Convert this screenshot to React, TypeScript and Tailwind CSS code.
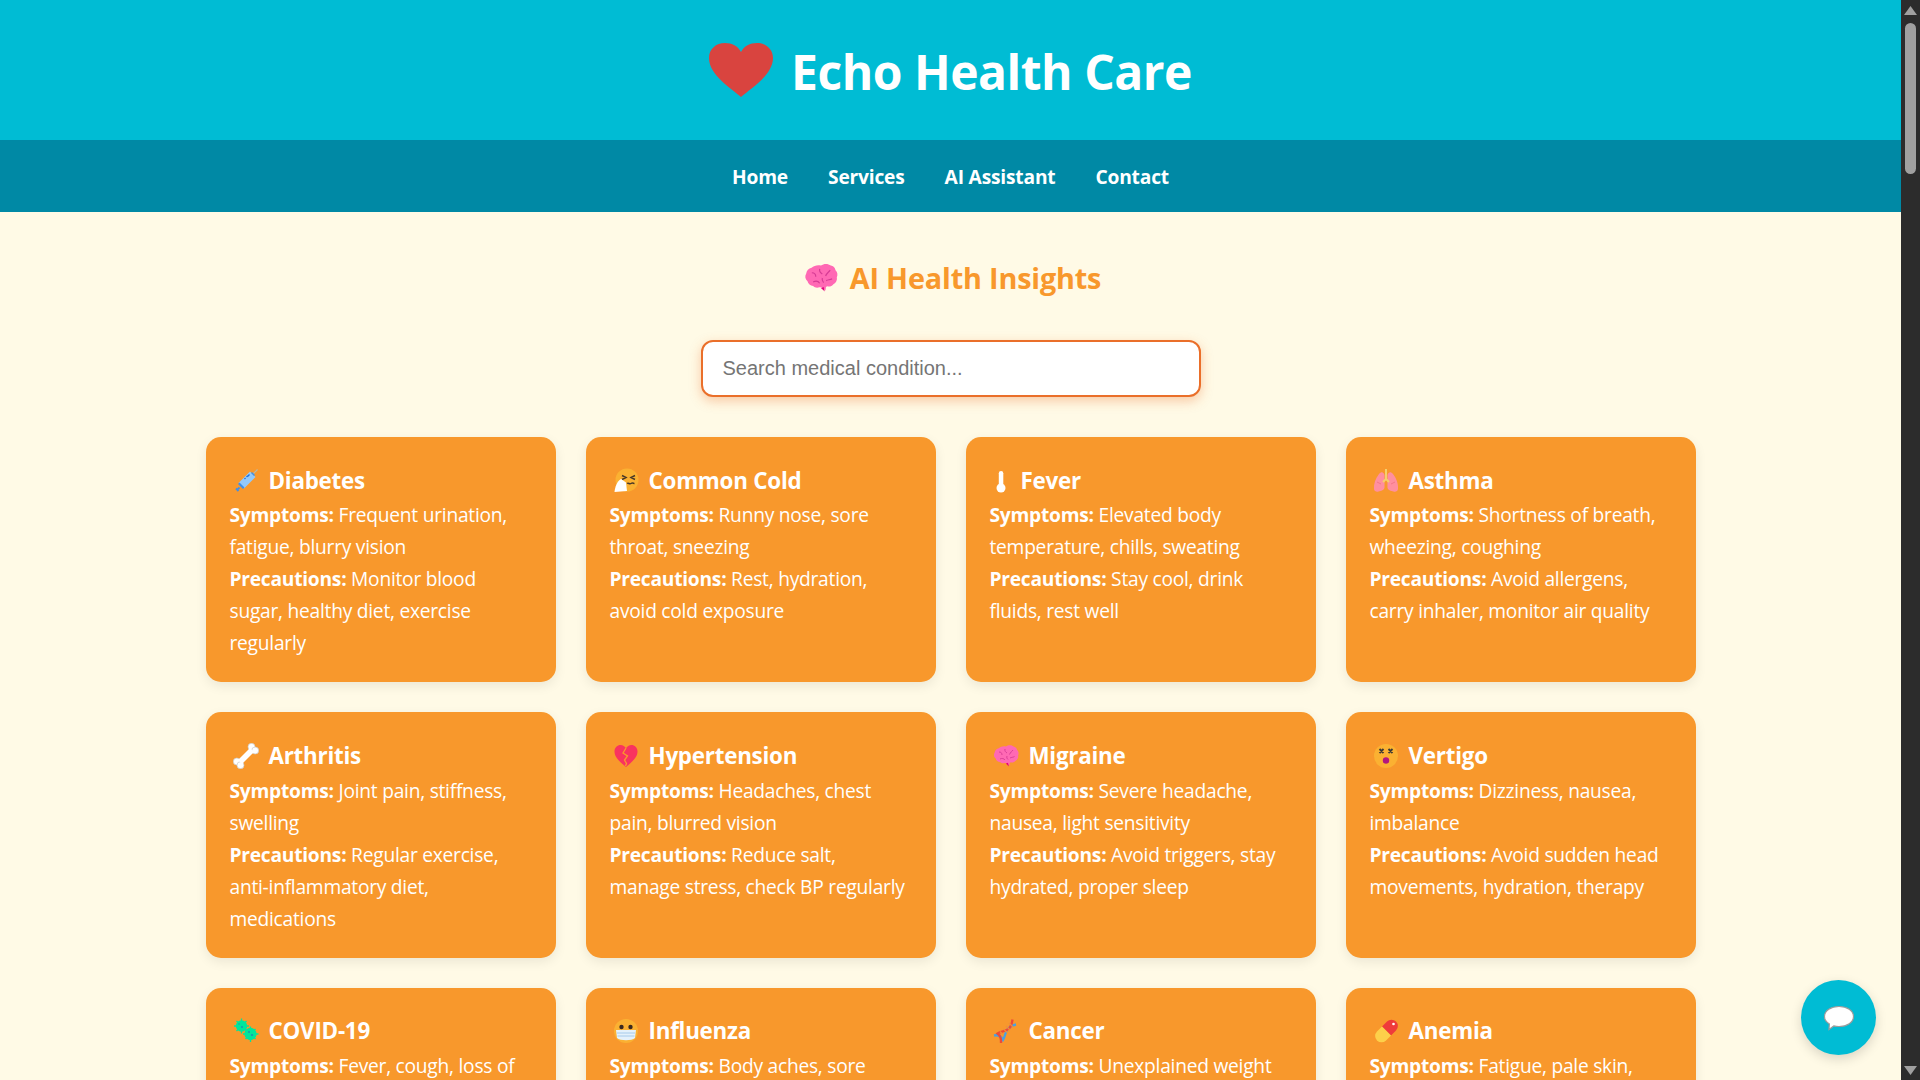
import React from "react";

const Svg = ({ children, w = 26 }: { children: React.ReactNode; w?: number }) => (
  <svg viewBox={`0 0 ${w} 26`} width={w} height={26} className="shrink-0">
    {children}
  </svg>
);

const Brain = () => (
  <>
    <path d="M13 3.500c2-1.600 5.500-1.600 7.500 0 1.800.2 3.400 1.700 3.600 3.600 1.500 1.400 1.900 3.600 1 5.400.5 2.200-.6 4.300-2.600 5.200-1.100 1.500-3 2.100-4.700 1.600l-1 .6-.4 2.600-2.400-2.200-2.200-.3c-1.600.7-3.600.4-4.800-.9-2.100-.1-3.900-1.600-4.300-3.600C.8 14 .5 11.400 1.700 9.600 1.900 7.400 3.600 5.600 5.800 5.200 7.600 3.300 10.900 2.700 13 3.500z" fill="#ff69b4" />
    <path d="M15 19.800l.9 3.600-3-2.800z" fill="#e6007e" />
    <path d="M6 9c2 0 3 1 3 3M12 6c-.5 2 .5 3 2 4M20 7c-1 1.500-2.500 2-3.500 4.500M7 16c2-1 4-.5 5 1M17 15c1.500-.8 3-.5 4.500-1.500M14 13c-.5 1.500 0 2.500 1 3.500" stroke="#d63b94" strokeWidth="0.9" fill="none" />
  </>
);

const Syringe = () => (
  <>
    <path d="M20 6l4.500-4.500" stroke="#b9b9a8" strokeWidth="1.200" />
    <path d="M17 3.500L22.500 9 11 20.500 5.500 15z" fill="#93c9fb" />
    <path d="M16.500 6.500l-2 2M14.500 8l-1 1M12.500 10l-1 1" stroke="#1f6fd6" strokeWidth="1.300" />
    <path d="M18 5l3 3 1-1-3-3z" fill="#3f8fe8" />
    <path d="M6.500 14.500l5 5-1.500 1.500-5-5z" fill="#3f8fe8" />
    <path d="M6.500 19.500l-2.500 2.500M3 20.500L5.500 23" stroke="#3f8fe8" strokeWidth="1.800" />
  </>
);

const Sneeze = () => (
  <>
    <circle cx="14" cy="12" r="11.500" fill="#fbb132" />
    <path d="M9 7.500l4 2-4 2M22 7.500l-4 2 4 2" stroke="#4a3a28" strokeWidth="1.500" fill="none" />
    <path d="M14 15.500c1.500-1 2.500 1 4 0s2.500 0 3.500 0" stroke="#4a3a28" strokeWidth="1.500" fill="none" />
    <path d="M8 11l5 3.500 1 8.500-12.500 1C2 19 4 13 8 11z" fill="#fff" />
  </>
);

const Thermo = () => (
  <Svg w={10}>
    <rect x="2.800" y="3" width="4.500" height="16" rx="2.250" fill="#fff" />
    <circle cx="5" cy="20" r="4.500" fill="#fff" />
  </Svg>
);

const Lungs = () => (
  <>
    <path d="M11.500 7c-1-3.500-3.500-3.500-5.500-1C2.500 10.500.5 16 1 21c.3 2.500 2.500 3 4.500 2.500 2.500-.5 6-1.500 6-4z" fill="#ff8f9f" />
    <path d="M14.500 7c1-3.500 3.500-3.500 5.500-1 3.500 4.500 5.500 10 5 15-.3 2.500-2.500 3-4.500 2.500-2.500-.5-6-1.500-6-4z" fill="#ff8f9f" />
    <path d="M13 1v10M13 11l-3 3M13 11l3 3" stroke="#f5d06c" strokeWidth="2" fill="none" />
    <path d="M4 14l4 2M22 14l-4 2" stroke="#ef7183" strokeWidth="0.800" />
  </>
);

const Bone = () => (
  <>
    <g fill="#fff" stroke="#c9c9c9" strokeWidth="0.700">
      <circle cx="18.500" cy="3.800" r="3.500" />
      <circle cx="22.200" cy="7.500" r="3.500" />
      <circle cx="3.800" cy="18.500" r="3.500" />
      <circle cx="7.500" cy="22.200" r="3.500" />
    </g>
    <path d="M17 5L5 17l4 4L21 9z" fill="#fff" />
  </>
);

const Broken = () => (
  <>
    <path d="M13 24C7 19 1.500 14.500 1.500 8.500 1.500 4.500 4.500 2 7.500 2c2.500 0 4.300 1.300 5.500 3.200C14.200 3.300 16 2 18.500 2c3 0 6 2.500 6 6.500 0 6-5.500 10.500-11.500 15.500z" fill="#f9335f" />
    <path d="M13 5l-3 5 4.500 3-3 4 2 3.500-1 2.500" stroke="#f99a2b" strokeWidth="1.300" fill="none" />
  </>
);

const Dizzy = () => (
  <>
    <circle cx="13" cy="13" r="12" fill="#fbb132" />
    <path d="M6.500 6l4 4M10.500 6l-4 4M15.500 6l4 4M19.500 6l-4 4" stroke="#3d3a36" strokeWidth="1.800" />
    <circle cx="13" cy="17.500" r="3.200" fill="#b3177f" />
  </>
);

const Virus = () => (
  <>
    <g fill="#00e69c" stroke="#00e69c" strokeWidth="1.300">
      <circle cx="8.500" cy="8" r="5" />
      <circle cx="17.500" cy="16" r="5.500" />
      <path d="M8.500 .5v15M1 8h15M3.500 3l10 10M13.500 3l-10 10M17.500 8.500v15.500M10 16h15.500M12.500 11l10 10M22.500 11l-10 10" fill="none" />
    </g>
    <circle cx="9" cy="9" r="0.900" fill="#1f8fb5" />
    <circle cx="16" cy="14" r="0.900" fill="#1f8fb5" />
    <circle cx="19" cy="17" r="1.100" fill="#1f8fb5" />
    <circle cx="6" cy="6" r="0.700" fill="#1f8fb5" />
  </>
);

const Mask = () => (
  <>
    <circle cx="13" cy="13" r="12" fill="#fbb132" />
    <circle cx="8.500" cy="9" r="2.200" fill="#3b2a20" />
    <circle cx="17.500" cy="9" r="2.200" fill="#3b2a20" />
    <path d="M3 12h20l-1 8c-3 3-15 3-18 0z" fill="#e4f1fb" />
    <path d="M4 15h18M4.500 18h17" stroke="#9fc6e6" strokeWidth="0.900" />
  </>
);

const Dna = () => (
  <>
    <path d="M1 17.500c5-1 7.500 1.500 9 4.500 2.500-4 2-8.500 5-11.500 2.500-2.500 5-3.500 8-4" stroke="#49a0e3" strokeWidth="2.300" fill="none" />
    <path d="M8 25c.5-5-1-7.500-3.500-9.500 4-2.500 8.500-2 11.500-5 2.500-2.500 3-5 3.500-9" stroke="#ef4a36" strokeWidth="2.300" fill="none" />
    <path d="M16 5l4 4M13 8l4 4M10.500 11l3.500 3.500M7 13.500l3 3" stroke="#f08d3c" strokeWidth="1.200" />
  </>
);

const Pill = () => (
  <>
    <path d="M14 3.500a6.300 6.300 0 0 1 9 9L18 17.500 9 8.500z" fill="#ef3b3b" />
    <path d="M9 8.500l9 9-5 5a6.300 6.300 0 0 1-9-9z" fill="#fdd04a" />
    <circle cx="20.500" cy="6" r="1.300" fill="#fff" />
  </>
);

const Heart = () => (
  <svg viewBox="0 0 64 54" width={64} height={54} className="shrink-0">
    <path d="M32 54C22 45 0 32 0 15 0 6 7 0 16 0c7 0 13 3 16 9 3-6 9-9 16-9 9 0 16 6 16 15 0 17-22 30-32 39z" fill="#d9443f" />
  </svg>
);

const ic = (n: React.ReactNode) => <Svg>{n}</Svg>;

const cards: [React.ReactNode, number, string, string, string][] = [
  [ic(<Syringe />), 39, "Diabetes", "Frequent urination, fatigue, blurry vision", "Monitor blood sugar, healthy diet, exercise regularly"],
  [ic(<Sneeze />), 39, "Common Cold", "Runny nose, sore throat, sneezing", "Rest, hydration, avoid cold exposure"],
  [<Thermo />, 31, "Fever", "Elevated body temperature, chills, sweating", "Stay cool, drink fluids, rest well"],
  [ic(<Lungs />), 39, "Asthma", "Shortness of breath, wheezing, coughing", "Avoid allergens, carry inhaler, monitor air quality"],
  [ic(<Bone />), 39, "Arthritis", "Joint pain, stiffness, swelling", "Regular exercise, anti-inflammatory diet, medications"],
  [ic(<Broken />), 39, "Hypertension", "Headaches, chest pain, blurred vision", "Reduce salt, manage stress, check BP regularly"],
  [ic(<Brain />), 39, "Migraine", "Severe headache, nausea, light sensitivity", "Avoid triggers, stay hydrated, proper sleep"],
  [ic(<Dizzy />), 39, "Vertigo", "Dizziness, nausea, imbalance", "Avoid sudden head movements, hydration, therapy"],
  [ic(<Virus />), 39, "COVID-19", "Fever, cough, loss of taste", "Wear mask, isolate, get vaccinated"],
  [ic(<Mask />), 39, "Influenza", "Body aches, sore throat, fever", "Annual vaccine, rest, hydration"],
  [ic(<Dna />), 39, "Cancer", "Unexplained weight loss, fatigue", "Regular screening, healthy lifestyle"],
  [ic(<Pill />), 39, "Anemia", "Fatigue, pale skin, dizziness", "Iron-rich diet, supplements, checkups"],
];

export default function App() {
  return (
    <div className="h-screen flex overflow-hidden bg-[#2c2c2c] font-['Open_Sans','Noto_Sans',sans-serif]">
      <div className="relative flex-1 min-w-0 overflow-hidden bg-[#fffae6]">
        <header className="bg-[#00bcd4] h-[140px] flex items-center justify-center gap-[18px] text-white">
          <Heart />
          <h1 className="text-[48px] font-bold leading-none tracking-[-0.01em] pt-[3px]">Echo Health Care</h1>
        </header>
        <nav className="bg-[#0089a5] h-[72px] pt-[2px] flex items-center justify-center gap-10 text-white font-bold text-[19.2px] tracking-[-0.01em]">
          <span>Home</span>
          <span>Services</span>
          <span>AI Assistant</span>
          <span>Contact</span>
        </nav>
        <main className="flex flex-col items-center pt-[46px]">
          <h2 className="flex items-center gap-3 pl-[4px] text-[#f8982c] text-[28.8px] font-bold leading-[40px] tracking-[-0.006em]">
            <svg viewBox="0 0 26 26" width={34} height={34} className="shrink-0"><Brain /></svg>
            AI Health Insights
          </h2>
          <input
            readOnly
            placeholder="Search medical condition..."
            className="mt-[42px] w-[500px] h-[57px] rounded-[12px] border-2 border-[#ea6f2a] bg-white px-5 text-[20px] font-['Liberation_Sans',sans-serif] placeholder:text-[#757575] shadow-[0_4px_12px_rgba(234,111,42,0.35)] outline-none"
          />
          <div className="mt-[40px] grid grid-cols-4 gap-x-[30px] gap-y-[30px] w-[1490px]">
            {cards.map((c) => (
              <div key={c[2]} className="bg-[#f8982c] rounded-[15px] pl-6 pr-[28px] pt-[25px] pb-[23px] min-h-[245.300px] text-white text-[19.2px] leading-[32px] tracking-[-0.013em] shadow-[0_4px_12px_rgba(0,0,0,0.08)]">
                <div className="flex items-center text-[22.4px] font-bold h-[37.300px]">
                  <span className={c[1] === 39 ? "w-[39px] pl-[3px] flex" : "w-[31px] pl-[6px] flex"}>{c[0]}</span>
                  {c[2]}
                </div>
                <div><b>Symptoms:</b> {c[3]}</div>
                <div><b>Precautions:</b> {c[4]}</div>
              </div>
            ))}
          </div>
        </main>
        <button className="absolute right-[25px] bottom-[25px] w-[75px] h-[75px] rounded-full bg-[#00bcd4] flex items-center justify-center shadow-[0_4px_12px_rgba(0,0,0,0.15)]">
          <svg viewBox="0 0 32 26" width={32} height={26}>
            <path d="M16 1.500c8 0 14.500 4 14.500 10S24 21.500 16 21.500c-2 0-3.500-.2-5.200-.6L6 24.500l.4-5.600C3 17 1.500 14.500 1.500 11.500c0-6 6.500-10 14.500-10z" fill="#fff" stroke="#9c9c9c" strokeWidth="1.200" />
          </svg>
        </button>
      </div>
      <aside className="w-[19px] shrink-0 h-full bg-[#2c2c2c] flex flex-col items-center justify-between pt-[6px] pb-[5px]">
        <div className="flex flex-col items-center">
          <svg viewBox="0 0 13 9" width={13} height={9}><path d="M6.500 0L13 9H0z" fill="#a0a0a0" /></svg>
          <div className="w-[11px] h-[151px] mt-[8px] rounded-full bg-[#a0a0a0]" />
        </div>
        <svg viewBox="0 0 13 9" width={13} height={9}><path d="M6.500 9L13 0H0z" fill="#a0a0a0" /></svg>
      </aside>
    </div>
  );
}
